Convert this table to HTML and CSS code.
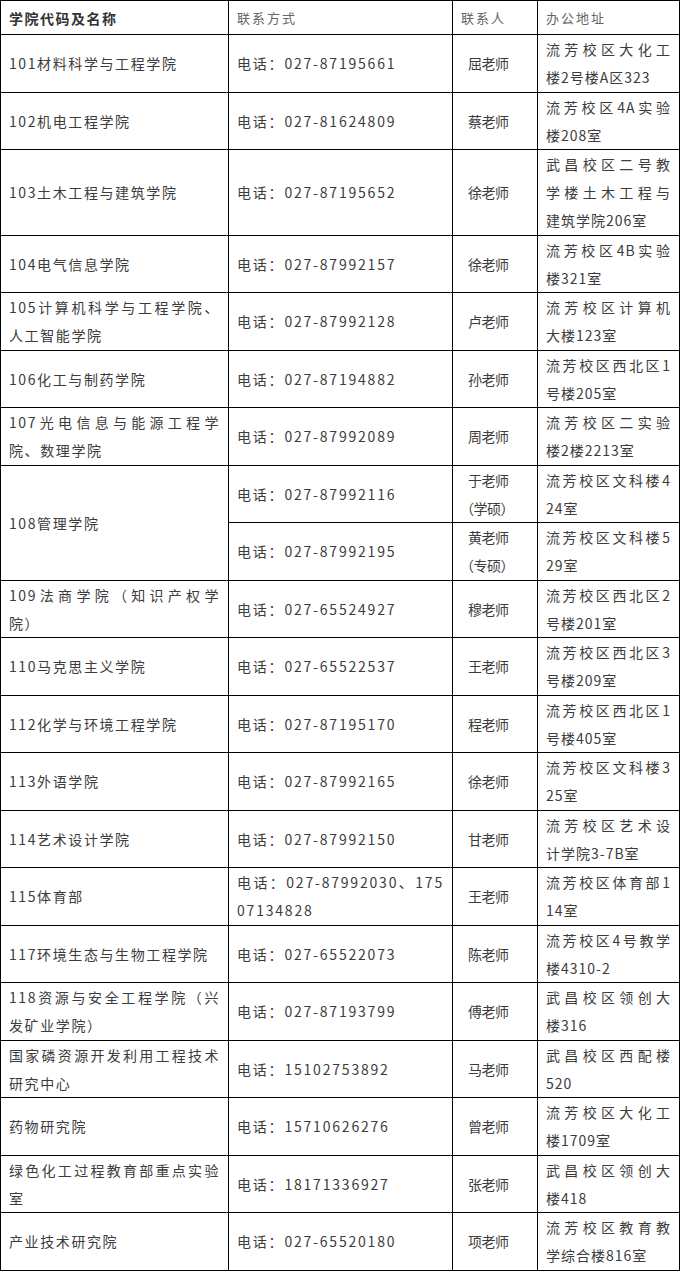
FILE: index.html
```html
<!DOCTYPE html>
<html lang="zh-CN">
<head>
<meta charset="utf-8">
<title>学院联系方式</title>
<link rel="stylesheet" href="styles.css">
</head>
<body>
<table class="contacts">
  <colgroup>
    <col class="c-name">
    <col class="c-phone">
    <col class="c-person">
    <col class="c-addr">
  </colgroup>
  <thead>
    <tr>
      <th class="h-name">学院代码及名称</th>
      <th>联系方式</th>
      <th>联系人</th>
      <th>办公地址</th>
    </tr>
  </thead>
  <tbody>
    <tr>
      <td class="name">101材料科学与工程学院</td>
      <td class="phone">电话：027-87195661</td>
      <td class="person">屈老师</td>
      <td class="addr"><span class="ln j">流芳校区大化工</span><span class="ln">楼2号楼A区323</span></td>
    </tr>
    <tr>
      <td class="name">102机电工程学院</td>
      <td class="phone">电话：027-81624809</td>
      <td class="person">蔡老师</td>
      <td class="addr"><span class="ln j">流芳校区4A实验</span><span class="ln">楼208室</span></td>
    </tr>
    <tr>
      <td class="name">103土木工程与建筑学院</td>
      <td class="phone">电话：027-87195652</td>
      <td class="person">徐老师</td>
      <td class="addr"><span class="ln j">武昌校区二号教</span><span class="ln j">学楼土木工程与</span><span class="ln">建筑学院206室</span></td>
    </tr>
    <tr>
      <td class="name">104电气信息学院</td>
      <td class="phone">电话：027-87992157</td>
      <td class="person">徐老师</td>
      <td class="addr"><span class="ln j">流芳校区4B实验</span><span class="ln">楼321室</span></td>
    </tr>
    <tr>
      <td class="name"><span class="ln j">105计算机科学与工程学院、</span><span class="ln">人工智能学院</span></td>
      <td class="phone">电话：027-87992128</td>
      <td class="person">卢老师</td>
      <td class="addr"><span class="ln j">流芳校区计算机</span><span class="ln">大楼123室</span></td>
    </tr>
    <tr>
      <td class="name">106化工与制药学院</td>
      <td class="phone">电话：027-87194882</td>
      <td class="person">孙老师</td>
      <td class="addr"><span class="ln j">流芳校区西北区1</span><span class="ln">号楼205室</span></td>
    </tr>
    <tr>
      <td class="name"><span class="ln j">107光电信息与能源工程学</span><span class="ln">院、数理学院</span></td>
      <td class="phone">电话：027-87992089</td>
      <td class="person">周老师</td>
      <td class="addr"><span class="ln j">流芳校区二实验</span><span class="ln">楼2楼2213室</span></td>
    </tr>
    <tr>
      <td class="name" rowspan="2">108管理学院</td>
      <td class="phone">电话：027-87992116</td>
      <td class="person"><span class="ln">于老师</span><span class="ln deg">（学硕）</span></td>
      <td class="addr"><span class="ln j">流芳校区文科楼4</span><span class="ln">24室</span></td>
    </tr>
    <tr>
      <td class="phone">电话：027-87992195</td>
      <td class="person"><span class="ln">黄老师</span><span class="ln deg">（专硕）</span></td>
      <td class="addr"><span class="ln j">流芳校区文科楼5</span><span class="ln">29室</span></td>
    </tr>
    <tr>
      <td class="name"><span class="ln j">109法商学院（知识产权学</span><span class="ln">院）</span></td>
      <td class="phone">电话：027-65524927</td>
      <td class="person">穆老师</td>
      <td class="addr"><span class="ln j">流芳校区西北区2</span><span class="ln">号楼201室</span></td>
    </tr>
    <tr>
      <td class="name">110马克思主义学院</td>
      <td class="phone">电话：027-65522537</td>
      <td class="person">王老师</td>
      <td class="addr"><span class="ln j">流芳校区西北区3</span><span class="ln">号楼209室</span></td>
    </tr>
    <tr>
      <td class="name">112化学与环境工程学院</td>
      <td class="phone">电话：027-87195170</td>
      <td class="person">程老师</td>
      <td class="addr"><span class="ln j">流芳校区西北区1</span><span class="ln">号楼405室</span></td>
    </tr>
    <tr>
      <td class="name">113外语学院</td>
      <td class="phone">电话：027-87992165</td>
      <td class="person">徐老师</td>
      <td class="addr"><span class="ln j">流芳校区文科楼3</span><span class="ln">25室</span></td>
    </tr>
    <tr>
      <td class="name">114艺术设计学院</td>
      <td class="phone">电话：027-87992150</td>
      <td class="person">甘老师</td>
      <td class="addr"><span class="ln j">流芳校区艺术设</span><span class="ln">计学院3-7B室</span></td>
    </tr>
    <tr>
      <td class="name">115体育部</td>
      <td class="phone"><span class="ln j">电话：027-87992030、175</span><span class="ln">07134828</span></td>
      <td class="person">王老师</td>
      <td class="addr"><span class="ln j">流芳校区体育部1</span><span class="ln">14室</span></td>
    </tr>
    <tr>
      <td class="name">117环境生态与生物工程学院</td>
      <td class="phone">电话：027-65522073</td>
      <td class="person">陈老师</td>
      <td class="addr"><span class="ln j">流芳校区4号教学</span><span class="ln">楼4310-2</span></td>
    </tr>
    <tr>
      <td class="name"><span class="ln j">118资源与安全工程学院（兴</span><span class="ln">发矿业学院）</span></td>
      <td class="phone">电话：027-87193799</td>
      <td class="person">傅老师</td>
      <td class="addr"><span class="ln j">武昌校区领创大</span><span class="ln">楼316</span></td>
    </tr>
    <tr>
      <td class="name"><span class="ln j">国家磷资源开发利用工程技术</span><span class="ln">研究中心</span></td>
      <td class="phone">电话：15102753892</td>
      <td class="person">马老师</td>
      <td class="addr"><span class="ln j">武昌校区西配楼</span><span class="ln">520</span></td>
    </tr>
    <tr>
      <td class="name">药物研究院</td>
      <td class="phone">电话：15710626276</td>
      <td class="person">曾老师</td>
      <td class="addr"><span class="ln j">流芳校区大化工</span><span class="ln">楼1709室</span></td>
    </tr>
    <tr>
      <td class="name"><span class="ln j">绿色化工过程教育部重点实验</span><span class="ln">室</span></td>
      <td class="phone">电话：18171336927</td>
      <td class="person">张老师</td>
      <td class="addr"><span class="ln j">武昌校区领创大</span><span class="ln">楼418</span></td>
    </tr>
    <tr>
      <td class="name">产业技术研究院</td>
      <td class="phone">电话：027-65520180</td>
      <td class="person">项老师</td>
      <td class="addr"><span class="ln j">流芳校区教育教</span><span class="ln">学综合楼816室</span></td>
    </tr>
  </tbody>
</table>
</body>
</html>
```

FILE: styles.css
```css
html, body {
  margin: 0;
  padding: 0;
  background: #ffffff;
}

body {
  font-family: "Noto Sans CJK SC", "Noto Sans", sans-serif;
  color: #3c3c3c;
}

.contacts {
  border-collapse: collapse;
  table-layout: fixed;
  width: 679px;
  margin: 0;
}

.c-name { width: 228px; }
.c-phone { width: 224px; }
.c-person { width: 85px; }
.c-addr { width: 142px; }

.contacts th,
.contacts td {
  border: 1px solid #000;
  vertical-align: middle;
  text-align: left;
  font-size: 14px;
  line-height: 28px;
  white-space: nowrap;
}

.contacts th {
  padding: 3px 8px 2px;
  font-weight: normal;
  font-size: 13px;
  letter-spacing: 2px;
  color: #666;
}

.contacts th.h-name {
  font-weight: bold;
  font-size: 14px;
  letter-spacing: 1.5px;
  color: #333;
}

.contacts td {
  padding: 0.25px 8px;
}

.name {
  letter-spacing: 1.6px;
}

.phone {
  letter-spacing: 1.8px;
}

.contacts td.person {
  font-size: 14px;
  letter-spacing: -0.5px;
  padding-left: 15px;
}

.person .deg {
  margin-left: -8px;
}

.addr {
  letter-spacing: 1px;
}

.ln {
  display: block;
}

.ln.j {
  text-align: justify;
  text-align-last: justify;
}
```
